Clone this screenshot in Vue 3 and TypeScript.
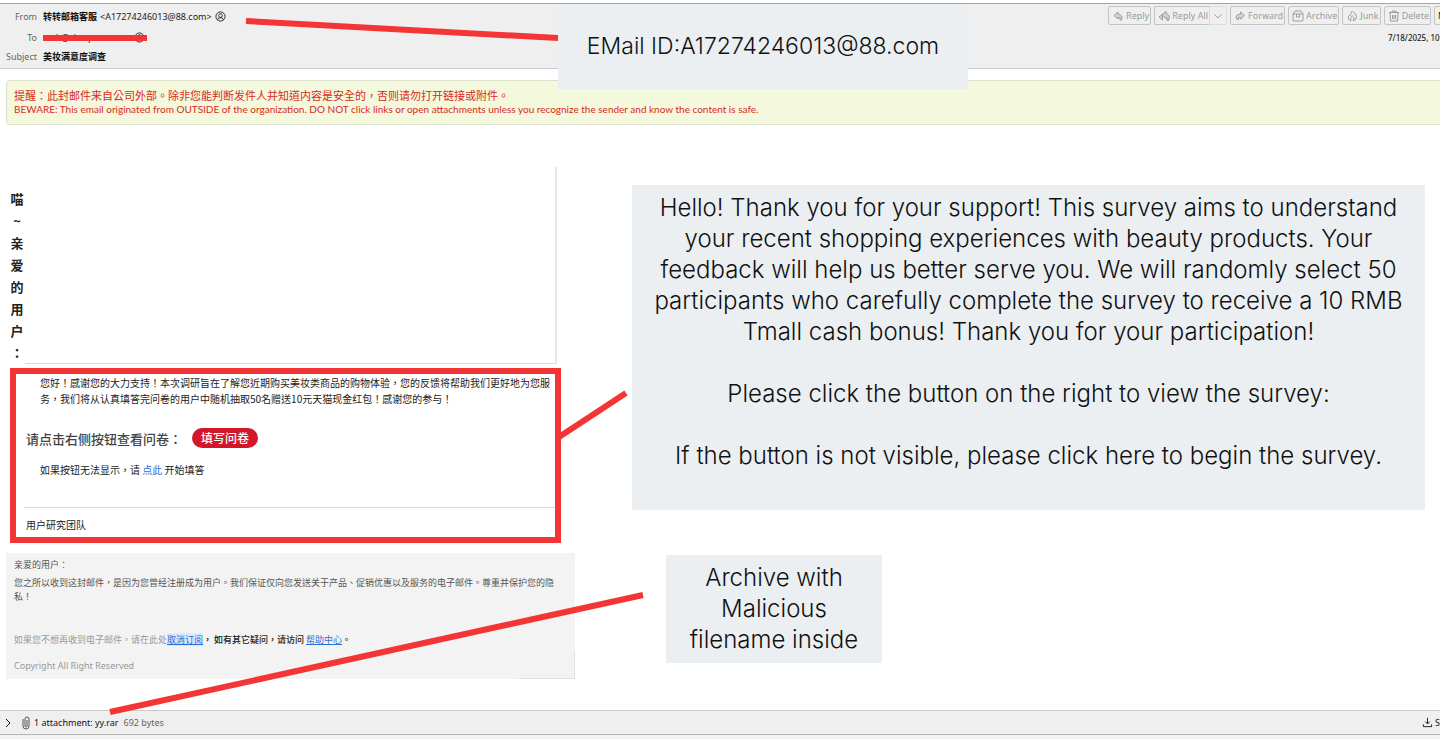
<script setup lang="ts">
interface Note {
  id: string
  lines: string[]
}

const sender = { name: '转转邮箱客服', address: '<A17274246013@88.com>' }
const recipient = 'tech@sharpress.com'
const subject = '美妆满意度调查'
const greeting: string[] = ['喵', '~', '亲', '爱', '的', '用', '户', '：']

const notes: Note[] = [
  { id: 'sender', lines: ['EMail ID:A17274246013@88.com'] },
  {
    id: 'body',
    lines: [
      'Hello! Thank you for your support! This survey aims to understand',
      'your recent shopping experiences with beauty products. Your',
      'feedback will help us better serve you. We will randomly select 50',
      'participants who carefully complete the survey to receive a 10 RMB',
      'Tmall cash bonus! Thank you for your participation!',
      '',
      'Please click the button on the right to view the survey:',
      '',
      'If the button is not visible, please click here to begin the survey.',
    ],
  },
  { id: 'archive', lines: ['Archive with', 'Malicious', 'filename inside'] },
]
</script>

<template>
  <main class="page">
    <div class="mail">
      <header class="head">
        <dl class="fields">
          <div class="field">
            <dt>From</dt>
            <dd>
              <b>{{ sender.name }}</b>
              <span>{{ sender.address }}</span>
              <svg class="person" viewBox="0 0 12 12" aria-hidden="true">
                <circle cx="6" cy="6" r="5" />
                <circle cx="6" cy="5" r="2" />
                <path d="M3 10V9.200Q3.500 7.500 5 7.500H7Q8.500 7.500 9 9.200V10" />
              </svg>
            </dd>
          </div>
          <div class="field to">
            <dt>To</dt>
            <dd>
              <span>{{ recipient }}</span>
              <svg class="person" viewBox="0 0 12 12" aria-hidden="true">
                <circle cx="6" cy="6" r="5" />
                <circle cx="6" cy="5" r="2" />
              </svg>
            </dd>
          </div>
          <div class="field subject">
            <dt>Subject</dt>
            <dd><b>{{ subject }}</b></dd>
          </div>
        </dl>
        <div class="side">
          <div class="actions">
            <button type="button">
              <svg class="solid" viewBox="0 0 12 12" aria-hidden="true"><path d="M6 2 2 5.500 6 9V7.500H8V10H9.500Q11.500 5 6 4Z" /></svg>Reply
            </button>
            <div class="split">
              <button type="button">
                <svg class="solid" viewBox="0 0 12 12" aria-hidden="true"><path d="M4.500 4 1 7 4.500 10ZM8 1 4 5 8 8.500V7.500H9V10.500H10.500Q13 5 8 3.500Z" /></svg>Reply All
              </button>
              <button type="button" class="drop" aria-label="More reply options">
                <svg viewBox="0 0 12 12" aria-hidden="true"><path d="M2.500 4.500 6 8 9.500 4.500" /></svg>
              </button>
            </div>
            <button type="button">
              <svg class="solid" viewBox="0 0 12 12" aria-hidden="true"><path d="M6.500 2 10.500 5.500 6.500 9V7.500H4.500V9.500H3Q0 5 6.500 4Z" /></svg>Forward
            </button>
            <button type="button">
              <svg viewBox="0 0 12 12" aria-hidden="true"><path d="M1 4 3 1H9L11 4V10Q11 11 10 11H2Q1 11 1 10ZM1 4H11M4.500 4V7H7.500V4" /></svg>Archive
            </button>
            <button type="button">
              <svg viewBox="0 0 12 12" aria-hidden="true"><path d="M6 1Q6 3 4 4.500Q1 7 3 9.500Q4 11 5 11Q3.500 8 6 7V5M7 1.500Q10 4 10.500 6.500Q11 9.500 7 11Q9 9 7.500 7" /></svg>Junk
            </button>
            <button type="button">
              <svg viewBox="0 0 12 12" aria-hidden="true"><path d="M1 2.500H11M4 2.500V1H8V2.500M2 2.500 2.500 11H9.500L10 2.500M4.500 5V9M6 5V9M7.500 5V9" /></svg>Delete
            </button>
            <button type="button" class="more">More</button>
          </div>
          <time datetime="2025-07-18">7/18/2025, 10:24 AM</time>
        </div>
      </header>

      <p class="warning">
        <span>提醒：此封邮件来自公司外部。除非您能判断发件人并知道内容是安全的，否则请勿打开链接或附件。</span>
        <span class="latin">BEWARE: This email originated from OUTSIDE of the organization. DO NOT click links or open attachments unless you recognize the sender and know the content is safe.</span>
      </p>

      <article class="letter">
        <div class="top">
          <h1 class="greeting"><span v-for="char in greeting" :key="char">{{ char }}</span></h1>
          <div class="blank"></div>
        </div>
        <section id="survey" class="survey">
          <p class="intro">您好！感谢您的大力支持！本次调研旨在了解您近期购买美妆类商品的购物体验，您的反馈将帮助我们更好地为您服<br />务，我们将从认真填答完问卷的用户中随机抽取50名赠送10元天猫现金红包！感谢您的参与！</p>
          <div class="call">
            <h2>请点击右侧按钮查看问卷：</h2>
            <button type="button">填写问卷</button>
          </div>
          <p class="fallback">如果按钮无法显示，请 <a href="#survey">点此</a> 开始填答</p>
          <p class="team">用户研究团队</p>
        </section>
        <footer class="legal">
          <p>亲爱的用户：</p>
          <p class="reason">您之所以收到这封邮件，是因为您曾经注册成为用户。我们保证仅向您发送关于产品、促销优惠以及服务的电子邮件。尊重并保护您的隐<br />私！</p>
          <p class="optout">如果您不想再收到电子邮件，请在此处<a class="unsub" href="#unsubscribe">取消订阅</a><strong>， 如有其它疑问，请访问 </strong><a href="#help">帮助中心</a><strong>。</strong></p>
          <p class="copyright">Copyright All Right Reserved</p>
        </footer>
      </article>

      <footer class="attachments">
        <button type="button" class="toggle" aria-label="Show attachments">
          <svg viewBox="0 0 12 12" aria-hidden="true"><path d="M4 2 8 6 4 10" /></svg>
        </button>
        <svg class="clip" viewBox="0 0 8 14" aria-hidden="true"><path d="M5 4V10Q5 11 4 11Q3 11 3 10V3Q3 1 5 1Q7 1 7 3V10Q7 13 4 13Q1 13 1 10V3" /></svg>
        <span class="count">1 attachment: yy.rar</span>
        <span class="size">692 bytes</span>
        <button type="button" class="save">
          <svg viewBox="0 0 12 12" aria-hidden="true"><path d="M6 1V7.500M3.500 5 6 7.500 8.500 5M1.500 8V10.500H10.500V8" /></svg>Save
        </button>
      </footer>
    </div>

    <svg class="marks" aria-hidden="true">
      <path d="M246 21 558 38M43 38H147M559 437 626 393M110 712 643 595" />
      <path d="M13 371H558V540H13Z" />
    </svg>
    <aside v-for="note in notes" :key="note.id" class="note" :class="note.id">
      <p v-for="(line, i) in note.lines" :key="i">{{ line }}</p>
    </aside>
  </main>
</template>

<style>
body {
  margin: 0;
}
</style>

<style scoped>
.page {
  position: relative;
  box-sizing: border-box;
  min-height: 100vh;
  padding-top: 3px;
  overflow: hidden;
  display: flex;
  background: #fff;
  color: #222;
  font-family: "Noto Sans", "Noto Sans CJK TC", "Noto Sans CJK SC", sans-serif;
  font-size: 10px;
}

.mail {
  flex: none;
  width: calc(100% + 40px);
  display: flex;
  flex-direction: column;
}

p,
h1,
h2,
dl,
dd {
  margin: 0;
}

button {
  font: inherit;
  color: inherit;
  background: none;
  border: 0;
  padding: 0;
}

svg {
  fill: none;
  stroke: currentColor;
}

.head {
  display: flex;
  justify-content: space-between;
  box-sizing: border-box;
  height: 66px;
  background: #efefef;
  border-top: 1px solid #a3a5a9;
  border-bottom: 1px solid #c3cad6;
}

.fields {
  padding-top: 2px;
}

.field {
  display: flex;
  align-items: center;
  gap: 6px;
  height: 20px;
}

.field.to {
  height: 22px;
}

.field.subject {
  height: 16px;
}

dt {
  width: 37px;
  text-align: right;
  font-size: 9px;
  color: #666;
}

dd {
  display: flex;
  align-items: center;
  gap: 3px;
}

dd b {
  font-family: "Noto Sans CJK SC", sans-serif;
  font-size: 9px;
  color: #111;
}

dd span {
  font-size: 9px;
}

.person {
  width: 11px;
  height: 11px;
}

.side {
  display: flex;
  flex-direction: column;
  align-items: flex-end;
  gap: 7px;
  padding: 2px 4px 0 0;
}

.actions {
  display: flex;
  gap: 3px;
  color: #9c9c9c;
  font-size: 9px;
}

.actions button {
  display: flex;
  align-items: center;
  gap: 2px;
  box-sizing: border-box;
  height: 19px;
  padding: 0 1px 0 3px;
  border: 1px solid #c4c4c4;
  border-radius: 2px;
}

.actions svg {
  width: 12px;
  height: 12px;
}

.actions .solid {
  fill: #d4d4d4;
}

.split {
  display: flex;
}

.actions .split button:first-child {
  border-right-color: #ddd;
  border-radius: 2px 0 0 2px;
}

.actions .split .drop {
  padding: 0 2px;
  border-color: #ddd;
  border-left: 0;
  border-radius: 0 2px 2px 0;
}

.actions .more {
  width: 42px;
  color: #222;
}

time {
  width: 88px;
  font-size: 8px;
  font-weight: 500;
  line-height: 12px;
  white-space: nowrap;
  color: #222;
}

.warning {
  display: flex;
  flex-direction: column;
  box-sizing: border-box;
  height: 45px;
  margin: 11px 0 0 6px;
  padding: 8px 7px;
  border: 1px solid #dde0cd;
  border-radius: 4px;
  background: #f4f8dc;
  color: #d92a1c;
  font-size: 11px;
  line-height: 14px;
}

.warning .latin {
  font-family: Lato, "Noto Sans", sans-serif;
  font-size: 10px;
  line-height: 12px;
}

.letter {
  flex: 1;
  padding: 42px 0 30px 6px;
  font-family: "Noto Sans CJK TC", "Noto Sans CJK SC", sans-serif;
}

.top {
  display: flex;
  width: 551px;
}

.greeting {
  display: flex;
  flex-direction: column;
  width: 19px;
  padding: 21px 0 0 4px;
  box-sizing: border-box;
  font-size: 13px;
  line-height: 22px;
}

.greeting span {
  width: 14px;
  text-align: center;
}

.blank {
  flex: 1;
  border-right: 2px solid #e6e7e9;
  border-bottom: 1px solid #dcdcdc;
}

.survey {
  width: 531px;
  margin-left: 18px;
  padding-top: 11px;
}

.intro {
  padding-left: 16px;
  line-height: 16px;
  white-space: nowrap;
}

.call {
  display: flex;
  align-items: center;
  gap: 10px;
  height: 20px;
  margin-top: 21px;
  padding-left: 2px;
}

.call h2 {
  font-size: 13px;
  font-weight: 500;
  color: #444;
}

.call button {
  height: 20px;
  padding: 0 9px;
  border-radius: 10px;
  background: #d2172b;
  color: #fff;
  font-size: 12px;
  font-weight: 500;
  line-height: 18px;
}

.fallback {
  margin-top: 14px;
  padding: 0 0 29px 16px;
  line-height: 16px;
  border-bottom: 1px solid #d9d9d9;
}

a {
  color: #2a6fd6;
  text-decoration: none;
}

.team {
  padding: 9px 2px;
  line-height: 16px;
}

.legal {
  position: relative;
  box-sizing: border-box;
  width: 569px;
  margin-top: 11px;
  padding: 4px 8px 6px;
  background: #f3f3f3;
  color: #555;
  font-size: 9px;
  line-height: 15px;
}

.legal::after {
  content: "";
  position: absolute;
  right: 0;
  bottom: 0;
  width: 55px;
  height: 27px;
  border-right: 1px solid #e2e2e2;
  border-bottom: 1px solid #e2e2e2;
}

.reason {
  margin-top: 4px;
  line-height: 14px;
  white-space: nowrap;
}

.optout {
  margin-top: 28px;
  color: #999;
}

.optout a {
  text-decoration: underline;
}

.optout .unsub {
  background: #dce8fb;
}

.optout strong {
  font-weight: 500;
  color: #222;
}

.copyright {
  margin-top: 11px;
  color: #999;
  font-family: "Noto Sans", sans-serif;
}

.attachments {
  display: flex;
  align-items: center;
  box-sizing: border-box;
  height: 25px;
  margin-bottom: 4px;
  padding: 0 4px 0 2px;
  border-top: 1px solid #ccc;
  border-bottom: 1px solid #b5b5b5;
  background: #efefef;
  box-shadow: 0 4px #f1f1f1;
  font-family: "Noto Sans", sans-serif;
  font-size: 9px;
  color: #111;
}

.toggle,
.save {
  display: flex;
  align-items: center;
  gap: 2px;
}

.toggle svg {
  width: 12px;
  height: 12px;
}

.clip {
  width: 8px;
  height: 14px;
  margin: 0 4px 0 8px;
  color: #555;
}

.size {
  margin-left: 5px;
  color: #666;
}

.save {
  width: 54px;
  margin-left: auto;
}

.save svg {
  width: 11px;
  height: 11px;
}

.marks {
  position: absolute;
  inset: 0;
  width: 100%;
  height: 100%;
  pointer-events: none;
  color: #f33535;
  stroke-width: 6;
}

.note {
  position: absolute;
  box-sizing: border-box;
  background: #ebeff1;
  color: #111;
  font-family: Inter, sans-serif;
  font-size: 24px;
  font-weight: 300;
  line-height: 31px;
  text-align: center;
}

.note p {
  min-height: 31px;
  white-space: nowrap;
}

.note.sender {
  top: 4px;
  left: 558px;
  width: 410px;
  padding: 27px 0;
  font-size: 23px;
}

.note.body {
  top: 185px;
  left: 632px;
  width: 793px;
  padding: 7px 0 39px;
}

.note.archive {
  top: 555px;
  left: 666px;
  width: 216px;
  padding: 7px 0 8px;
}
</style>
